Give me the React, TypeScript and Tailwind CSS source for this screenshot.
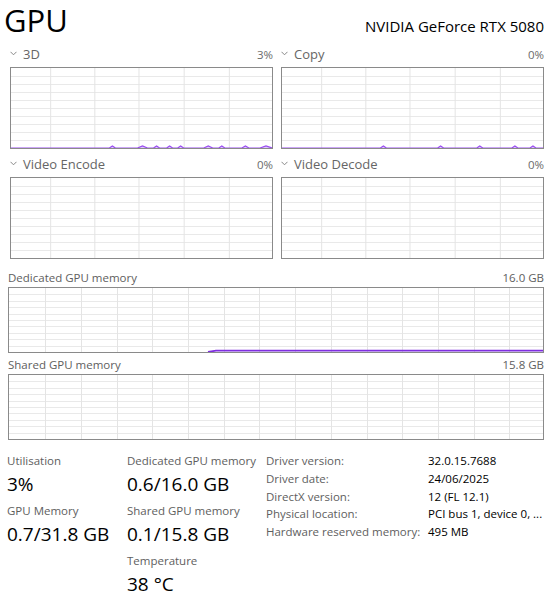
import React from "react";

type Bump = [number, number];

const font = { fontFamily: '"Open Sans", "Noto Sans", sans-serif' };

// little squiggles along the bottom of the engine graphs
const bumpPath = (bumps: Bump[], w: number, h: number) => {
  let d = `M0 ${h}`;
  bumps.forEach(([x, width]) => {
    d += ` L${x} ${h} L${x + width / 2} ${h - 2} L${x + width} ${h}`;
  });
  d += ` L${w} ${h}`;
  return d;
};

const Chevron = () => (
  <svg width="7" height="5" viewBox="0 0 7 5" className="mr-[6px] mt-[-3px]">
    <polyline points="0.5,0.8 3.5,3.8 6.5,0.8" fill="none" stroke="#888" strokeWidth="1" />
  </svg>
);

const EngineChart = ({ bumps }: { bumps: Bump[] }) => {
  const w = 260;
  const h = 80;
  const vLines = [39, 83, 127, 172, 217];
  const hLines = [8, 16, 24, 32, 40, 48, 56, 64, 72];
  return (
    <div className="h-[82px] border border-[#8a8a8a] bg-white">
      <svg width="100%" height="100%" viewBox={`0 0 ${w} ${h}`} preserveAspectRatio="none" className="block">
        {hLines.map((y) => (
          <line key={"h" + y} x1="0" x2={w} y1={y + 0.5} y2={y + 0.5} stroke="#e9e9e9" strokeWidth="1" />
        ))}
        {vLines.map((x) => (
          <line key={"v" + x} x1={x + 0.5} x2={x + 0.5} y1="0" y2={h} stroke="#e4e4e4" strokeWidth="1" />
        ))}
        {bumps.length > 0 && (
          <path d={bumpPath(bumps, w, h)} fill="#c9a6f5" fillOpacity="0.6" stroke="#9a4ef0" strokeWidth="1.2" />
        )}
      </svg>
    </div>
  );
};

const EnginePanel = ({ name, pct, bumps }: { name: string; pct: string; bumps: Bump[] }) => (
  <div>
    <div className="flex h-[20px] items-center justify-between pb-[5px]">
      <div className="flex items-center text-[13px] text-[#666]">
        <Chevron />
        {name}
      </div>
      <span className="text-[11.5px] text-[#6b6b6b]">{pct}</span>
    </div>
    <EngineChart bumps={bumps} />
  </div>
);

const MemoryChart = ({ line }: { line?: boolean }) => {
  const w = 534;
  const h = 64;
  const vLines = Array.from({ length: 14 }, (_, i) => Math.round(36.2 + i * 35.7));
  const hLines = [6, 13, 19, 26, 32, 38, 45, 51, 58];
  return (
    <div className="h-[66px] border border-[#8a8a8a] bg-white">
      <svg width="100%" height="100%" viewBox={`0 0 ${w} ${h}`} preserveAspectRatio="none" className="block">
        {hLines.map((y) => (
          <line key={"h" + y} x1="0" x2={w} y1={y + 0.5} y2={y + 0.5} stroke="#e9e9e9" strokeWidth="1" />
        ))}
        {vLines.map((x) => (
          <line key={"v" + x} x1={x + 0.5} x2={x + 0.5} y1="0" y2={h} stroke="#e4e4e4" strokeWidth="1" />
        ))}
        {line && (
          <path d={`M199 ${h} L207 62.6 L${w} 62.6`} fill="none" stroke="#7f2ee0" strokeWidth="1.8" />
        )}
      </svg>
    </div>
  );
};

const MemoryPanel = ({ name, total, line, top }: { name: string; total: string; line?: boolean; top: string }) => (
  <div className={top}>
    <div className="flex h-[18px] items-center justify-between text-[11.5px] text-[#5e5e5e]">
      <span>{name}</span>
      <span>{total}</span>
    </div>
    <MemoryChart line={line} />
  </div>
);

const Stat = ({ label, value }: { label: string; value: string }) => (
  <div className="mb-[4px]">
    <div className="text-[11.5px] leading-[18px] text-[#5e5e5e]">{label}</div>
    <div className="text-[19px] leading-[28px] text-black">{value}</div>
  </div>
);

const info = [
  ["Driver version:", "32.0.15.7688"],
  ["Driver date:", "24/06/2025"],
  ["DirectX version:", "12 (FL 12.1)"],
  ["Physical location:", "PCI bus 1, device 0, ..."],
  ["Hardware reserved memory:", "495 MB"],
];

export default function App() {
  return (
    <div className="h-[603px] w-[556px] overflow-hidden bg-white" style={font}>
      <div className="flex h-[47px] items-baseline justify-between pl-[4px] pr-[12px]">
        <h1 className="text-[31px] font-normal leading-[41px] text-black">GPU</h1>
        <span className="text-[15px] text-black">NVIDIA GeForce RTX 5080</span>
      </div>

      <div className="grid grid-cols-2 gap-x-[8px] gap-y-[8px] pl-[10px] pr-[12px]">
        <EnginePanel
          name="3D"
          pct="3%"
          bumps={[[98, 6], [126, 10], [142, 6], [155, 6], [166, 6], [192, 9], [207, 6], [230, 7], [248, 12]]}
        />
        <EnginePanel name="Copy" pct="0%" bumps={[[98, 6], [155, 6], [194, 6], [229, 6], [247, 6]]} />
        <EnginePanel name="Video Encode" pct="0%" bumps={[]} />
        <EnginePanel name="Video Decode" pct="0%" bumps={[]} />
      </div>

      <div className="pl-[8px] pr-[12px]">
        <MemoryPanel name="Dedicated GPU memory" total="16.0 GB" line top="mt-[10px]" />
        <MemoryPanel name="Shared GPU memory" total="15.8 GB" top="mt-[3px]" />
      </div>

      <div className="mt-[12px] flex pl-[7px]">
        <div className="w-[120px]">
          <Stat label="Utilisation" value="3%" />
          <Stat label="GPU Memory" value="0.7/31.8 GB" />
        </div>
        <div className="w-[139px]">
          <Stat label="Dedicated GPU memory" value="0.6/16.0 GB" />
          <Stat label="Shared GPU memory" value="0.1/15.8 GB" />
          <div className="mt-[1px]">
            <Stat label="Temperature" value="38 °C" />
          </div>
        </div>
        <div className="text-[11.5px] leading-[17.8px]">
          {info.map(([k, v]) => (
            <div key={k} className="flex">
              <span className="w-[162px] text-[#5e5e5e]">{k}</span>
              <span className="text-black">{v}</span>
            </div>
          ))}
        </div>
      </div>
    </div>
  );
}
